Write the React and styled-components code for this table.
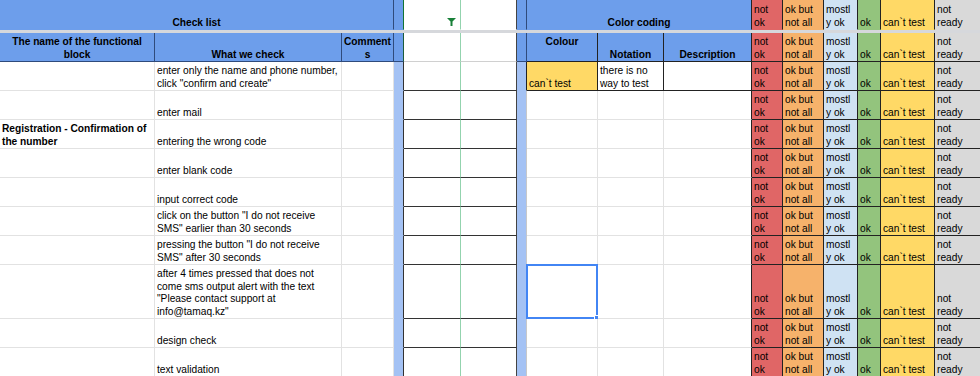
import styled, { createGlobalStyle } from "styled-components";

const GRID = "#e2e2e2";
const DARK = "#222";
const HEAD_BORDER = "#2f4b7c";
const HEAD_BLUE = "#6d9eeb";
const STRIPE_BLUE = "#a4c2f4";

const legend = [
    { bg: "#e06666", lines: ["not", "ok"] },
    { bg: "#f6b26b", lines: ["ok but", "not all"] },
    { bg: "#cfe2f3", lines: ["mostl", "y ok"] },
    { bg: "#93c47d", lines: ["ok"] },
    { bg: "#ffd966", lines: ["can`t test"] },
    { bg: "#d9d9d9", lines: ["not", "ready"] },
];

const rows = [
    { b: ["enter only the name and phone number,", 'click "confirm and create"'], sample: true },
    { b: ["enter mail"] },
    { a: ["Registration - Confirmation of", "the number"], b: ["entering the wrong code"] },
    { b: ["enter blank code"] },
    { b: ["input correct code"] },
    { b: ['click on the button "I do not receive', 'SMS" earlier than 30 seconds'] },
    { b: ['pressing the button "I do not receive', 'SMS" after 30 seconds'] },
    {
        b: [
            "after 4 times pressed that does not",
            "come sms output alert with the text",
            '"Please contact support at',
            'info@tamaq.kz"',
        ],
        selected: true,
    },
    { b: ["design check"] },
    { b: ["text validation"] },
];

const Lines = ({ lines = [] }) => lines.map((l, i) => <Line key={i}>{l}</Line>);

const FilterIcon = () => (
    <svg width="9" height="8" viewBox="0 0 9 8">
        <path d="M0 0h9L5.5 3.5V8h-2V3.5z" fill="#188038" />
    </svg>
);

const LegendCells = ({ top }) =>
    legend.map((l, i) => (
        <Cell key={i} $bg={l.bg} $r={DARK} $b={top ? l.bg : DARK}>
            <Lines lines={l.lines} />
        </Cell>
    ));

const App = () => {
    return (
        <>
            <GlobalStyle />
            <Sheet>
                {/* row 1 */}
                <Cell $span={3} $bg={HEAD_BLUE} $align="center" $bold $r={HEAD_BORDER} $b={HEAD_BLUE}>
                    <Line>Check list</Line>
                </Cell>
                <Cell $bg={HEAD_BLUE} $r="#137333" $b={HEAD_BLUE} />
                <FilterCell $r="#93d3ae" $b="#fff">
                    <FilterIcon />
                </FilterCell>
                <Cell $r="#444" $b="#fff" />
                <Cell $bg={HEAD_BLUE} $r={HEAD_BORDER} $b={HEAD_BLUE} />
                <Cell $span={3} $bg={HEAD_BLUE} $align="center" $bold $r={DARK} $b={HEAD_BLUE}>
                    <Line>Color coding</Line>
                </Cell>
                <LegendCells top />

                <FreezeBar />

                {/* row 2 */}
                <Cell $bg={HEAD_BLUE} $align="center" $bold $r={HEAD_BORDER} $b={HEAD_BORDER}>
                    <Lines lines={["The name of the functional", "block"]} />
                </Cell>
                <Cell $bg={HEAD_BLUE} $align="center" $bold $r={HEAD_BORDER} $b={HEAD_BORDER}>
                    <Line>What we check</Line>
                </Cell>
                <Cell $bg={HEAD_BLUE} $align="center" $bold $r={HEAD_BORDER} $b={HEAD_BORDER}>
                    <Lines lines={["Comment", "s"]} />
                </Cell>
                <Cell $bg={HEAD_BLUE} $r="#1d5c3a" $b={HEAD_BORDER} />
                <Cell $r="#93d3ae" $b="#d0d0d0" />
                <Cell $r="#444" $b="#d0d0d0" />
                <Cell $bg={HEAD_BLUE} $r={HEAD_BORDER} $b={HEAD_BORDER} />
                <Cell $bg={HEAD_BLUE} $align="center" $valign="top" $bold $r={DARK} $b={DARK}>
                    <Line>Colour</Line>
                </Cell>
                <Cell $bg={HEAD_BLUE} $align="center" $bold $r={DARK} $b={DARK}>
                    <Line>Notation</Line>
                </Cell>
                <Cell $bg={HEAD_BLUE} $align="center" $bold $r={DARK} $b={DARK}>
                    <Line>Description</Line>
                </Cell>
                <LegendCells />

                {/* body rows */}
                {rows.map((row, i) => (
                    <Row key={i} row={row} />
                ))}
            </Sheet>
        </>
    );
};

const Row = ({ row }) => (
    <>
        <Cell $bold>
            <Lines lines={row.a} />
        </Cell>
        <Cell>
            <Lines lines={row.b} />
        </Cell>
        <Cell />
        <Cell $bg={STRIPE_BLUE} $r="#333" $b={STRIPE_BLUE} />
        <Cell $r="#93d3ae" $b="#333" />
        <Cell $r="#444" $b="#333" />
        <Cell $bg={STRIPE_BLUE} $r={row.sample ? DARK : "#c8c8c8"} $b={STRIPE_BLUE} />
        {row.sample ? (
            <>
                <Cell $bg="#ffd966" $r={DARK} $b={DARK}>
                    <Line>can`t test</Line>
                </Cell>
                <Cell $r={DARK} $b={DARK}>
                    <Lines lines={["there is no", "way to test"]} />
                </Cell>
                <Cell $r={DARK} $b={DARK} />
            </>
        ) : (
            <>
                <Cell>{row.selected && <Selection />}</Cell>
                <Cell />
                <Cell $r={DARK} />
            </>
        )}
        <LegendCells />
    </>
);

export default App;

// ================== STYLES ==================
const GlobalStyle = createGlobalStyle`
    html, body {
        margin: 0;
        padding: 0;
        background: #fff;
        overflow: hidden;
    }
    body {
        font-family: "Liberation Sans", Arial, sans-serif;
        font-size: 10.2px;
        line-height: 12.5px;
        color: #000;
    }
`;

const Sheet = styled.div`
    display: grid;
    grid-template-columns: 155px 187px 52px 10px 57px 56px 10px 71px 66px 88px 31px 41px 34px 23px 54px 60px;
    grid-template-rows: 30px 3px 29px repeat(7, 29px) 54px 29px 29px;
    width: 980px;
    height: 376px;
    overflow: hidden;
`;

const Cell = styled.div`
    box-sizing: border-box;
    position: relative;
    min-width: 0;
    display: flex;
    flex-direction: column;
    justify-content: ${(p) => (p.$valign === "top" ? "flex-start" : "flex-end")};
    align-items: ${(p) => (p.$align === "center" ? "center" : "flex-start")};
    padding: ${(p) => (p.$valign === "top" ? "3px 2px 0 2px" : "0 2px 0 2px")};
    background: ${(p) => p.$bg || "#fff"};
    border-right: 1px solid ${(p) => p.$r || GRID};
    border-bottom: 1px solid ${(p) => p.$b || GRID};
    font-weight: ${(p) => (p.$bold ? 700 : 400)};
    grid-column: ${(p) => (p.$span ? `span ${p.$span}` : "auto")};
`;

const FilterCell = styled(Cell)`
    align-items: flex-end;
    padding: 0 4px 3px 0;
`;

const Line = styled.span`
    display: block;
    white-space: nowrap;
`;

const FreezeBar = styled.div`
    grid-column: 1 / -1;
    background: #d6d8dc;
`;

const Selection = styled.div`
    position: absolute;
    top: -1px;
    left: -1px;
    right: -1px;
    bottom: -1px;
    border: 2px solid #4285f4;

    &::after {
        content: "";
        position: absolute;
        right: -5px;
        bottom: -5px;
        width: 5px;
        height: 5px;
        background: #4285f4;
        border: 1px solid #fff;
    }
`;
